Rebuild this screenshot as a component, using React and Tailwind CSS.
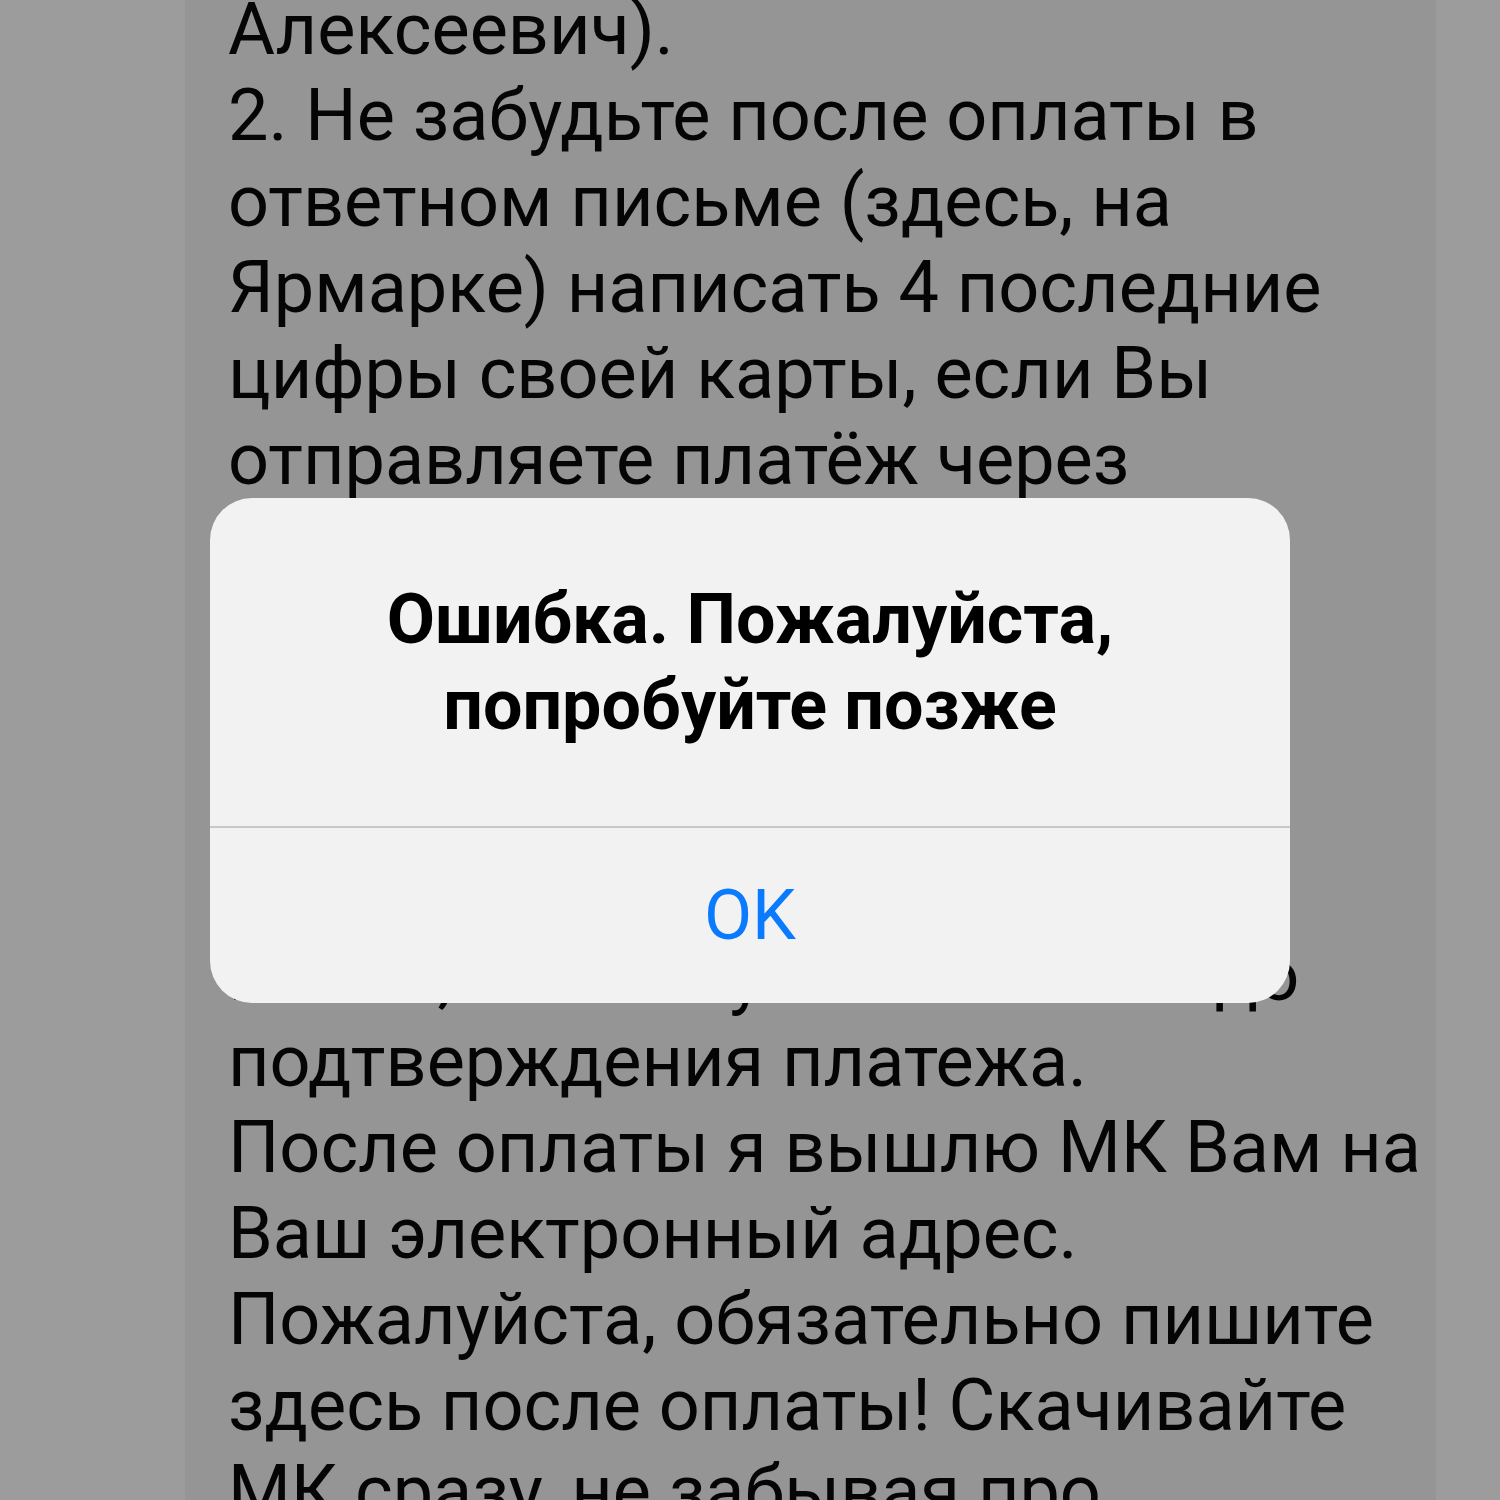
import React from "react";

const before = [
  "Алексеевич).",
  "2. Не забудьте после оплаты в",
  "ответном письме (здесь, на",
  "Ярмарке) написать 4 последние",
  "цифры своей карты, если Вы",
  "отправляете платёж через",
  "Сбербанк Онлайн, или ФИО",
  "отправителя, если платите",
  "через терминал или с чужой",
  "карты. Эти данные нужны мне",
  "для поиска Вашего платежа.",
  "Иначе, не смогу выслать МК до",
  "подтверждения платежа.",
  "После оплаты я вышлю МК Вам на",
  "Ваш электронный адрес.",
  "Пожалуйста, обязательно пишите",
  "здесь после оплаты! Скачивайте",
  "МК сразу, не забывая про",
  "сохранение файла на компьютер.",
];

const App = () => {
  return (
    <div
      className="relative w-[1500px] h-[1500px] overflow-hidden bg-[#9c9c9c]"
      style={{ fontFamily: "Roboto, 'Noto Sans', sans-serif" }}
    >
      {/* Message column */}
      <div className="ml-[185px] w-[1251px] h-[1500px] bg-[#959595] pl-[43px] flex flex-col overflow-hidden">
        <div className="-mt-[13px] text-[72px] leading-[86px] text-[#050505]">
          {before.map((line, i) => (
            <div key={i} className="whitespace-nowrap">
              {line}
            </div>
          ))}
        </div>
      </div>

      {/* Alert */}
      <div className="absolute left-[210px] top-[498px] w-[1080px] rounded-[42px] bg-[#f2f2f2] overflow-hidden">
        <div className="h-[328px] flex items-center justify-center text-center">
          <div className="text-[70px] leading-[86px] font-bold text-black">
            Ошибка. Пожалуйста,
            <br />
            попробуйте позже
          </div>
        </div>
        <div className="h-[2px] bg-[#c8c8cc]" />
        <div className="h-[175px] flex items-center justify-center">
          <span className="text-[70px] text-[#0a7aff]">OK</span>
        </div>
      </div>
    </div>
  );
};

export default App;
